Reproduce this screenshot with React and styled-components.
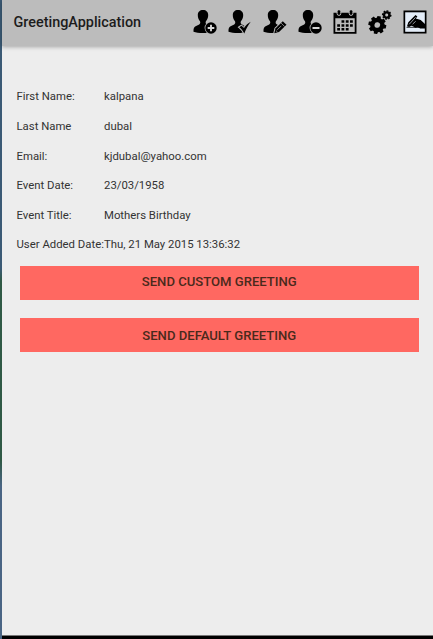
import React from "react";
import styled, { createGlobalStyle } from "styled-components";

const details = [
  { label: "First Name:", value: "kalpana" },
  { label: "Last Name", value: "dubal" },
  { label: "Email:", value: "kjdubal@yahoo.com" },
  { label: "Event Date:", value: "23/03/1958" },
  { label: "Event Title:", value: "Mothers Birthday" },
  { label: "User Added Date:", value: "Thu, 21 May 2015 13:36:32" },
];

const Person = () => (
  <path d="M10 0C6.800 0 4.800 2 4.800 5c0 2.700.8 4.800 2.200 6.300.5 1.200.3 2.400-.8 3.100L2.600 16.300C1 17.100.5 18.700.5 20.500v1.300c2.300.8 5.700 1.200 9.300 1.200 2 0 3.700-.1 5.200-.5l3.400-4.700c-.4-1-1-1.500-1.800-1.900l-2.900-1.600c-1.100-.6-1.300-1.800-.8-3C14.300 9.800 15.200 7.700 15.200 5c0-3-2-5-5.200-5z" />
);

const UserAddIcon = () => (
  <Icon viewBox="0 0 24 24">
    <Person />
    <circle cx="18" cy="18" r="6.400" fill="#bcbcbc" />
    <circle cx="18" cy="18" r="5.700" />
    <path d="M14.700 18h6.600M18 14.700v6.600" stroke="#d6d6d6" strokeWidth="1.900" />
  </Icon>
);

const UserCheckIcon = () => (
  <Icon viewBox="0 0 24 24">
    <Person />
    <path
      d="M11.300 17.200l2.200-1.500 2.500 2.400c2-2.900 4-4.900 6.800-6.300-2.600 3-4.500 7-6.500 11.700-1.300-2.600-2.800-4.600-5-6.300z"
      stroke="#bcbcbc"
      strokeWidth="2"
      paintOrder="stroke"
    />
  </Icon>
);

const UserEditIcon = () => (
  <Icon viewBox="0 0 24 24">
    <Person />
    <path
      d="M11.300 23.300l1.100-4.700 7.400-7.300 3.700 3.500-7.500 7.300z"
      stroke="#bcbcbc"
      strokeWidth="2"
      paintOrder="stroke"
    />
    <path
      d="M18.100 13.100l3.500 3.400M14.300 19.800l4-4M12.900 20.600l1.500 1.400"
      stroke="#bcbcbc"
      strokeWidth=".7"
    />
  </Icon>
);

const UserRemoveIcon = () => (
  <Icon viewBox="0 0 24 24">
    <Person />
    <circle cx="18" cy="18" r="6.400" fill="#bcbcbc" />
    <circle cx="18" cy="18" r="5.700" />
    <path d="M14.500 18h7" stroke="#d6d6d6" strokeWidth="2" />
  </Icon>
);

const CalendarIcon = () => (
  <Icon viewBox="0 0 24 24">
    <path d="M.5 2.700h23v21H.5zM2.300 8.300v13.700h19.400V8.300z" fillRule="evenodd" />
    <g stroke="#bcbcbc" strokeWidth="1">
      <rect x="4.100" y="-.3" width="3.700" height="5.700" rx="1.800" />
      <rect x="16.200" y="-.3" width="3.700" height="5.700" rx="1.800" />
    </g>
    <path d="M8.500 10.300h2.800v2.500H8.500zM12.800 10.300h2.800v2.500h-2.800zM17 10.300h2.800v2.500H17zM4.200 14.200H7v2.500H4.200zM8.500 14.200h2.800v2.500H8.500zM12.800 14.200h2.800v2.500h-2.800zM17 14.200h2.800v2.500H17zM4.200 18.100H7v2.500H4.200zM8.500 18.100h2.800v2.500H8.500zM12.800 18.100h2.800v2.500h-2.800z" />
  </Icon>
);

const gearTeeth = [0, 45, 90, 135, 180, 225, 270, 315];

const Gear = ({ x, y, scale, turn }) => (
  <g transform={`translate(${x} ${y}) rotate(${turn}) scale(${scale})`}>
    <circle r="5.300" fill="none" stroke="#000" strokeWidth="4.600" />
    {gearTeeth.map((angle) => (
      <path
        key={angle}
        d="M-2.300-6.500L-1.800-9.500h3.600l.5 3z"
        transform={`rotate(${angle})`}
      />
    ))}
  </g>
);

const SettingsIcon = () => (
  <Icon viewBox="0 0 24 24">
    <Gear x={9.3} y={15} scale={0.94} turn={12} />
    <Gear x={18.7} y={5} scale={0.5} turn={10} />
  </Icon>
);

const SignIcon = () => (
  <Icon viewBox="0 0 24 24">
    <rect x=".5" y=".5" width="23" height="23" />
    <rect x="2.200" y="2.300" width="19.600" height="19.500" fill="#e4edf8" />
    <path d="M4 16.300l1.300-4.100 7.200-7.100 1.900 1.300-1.600 2.100 4.900 1.600 4.300 4v4.400h-4.800l-2.400-1.300-2.600.5-2.300-1.500-1.600-.4-2.200 1.300z" />
    <path
      d="M6.200 14.300l6.400-7M9.600 14.100l3.100-2.800"
      fill="none"
      stroke="#e4edf8"
      strokeWidth=".65"
    />
    <path d="M3.500 17.300h17" stroke="#000" strokeWidth=".8" />
  </Icon>
);

const App = () => {
  return (
    <>
      <GlobalStyle />
      <Screen>
        <ActionBar>
          <Title>GreetingApplication</Title>
          <Actions>
            <UserAddIcon />
            <UserCheckIcon />
            <UserEditIcon />
            <UserRemoveIcon />
            <CalendarIcon />
            <SettingsIcon />
            <SignIcon />
          </Actions>
        </ActionBar>
        <Content>
          <Details>
            {details.map((item) => (
              <DetailRow key={item.label}>
                <span>{item.label}</span>
                <span>{item.value}</span>
              </DetailRow>
            ))}
          </Details>
          <Buttons>
            <GreetingButton $height={34.5}>Send Custom Greeting</GreetingButton>
            <GreetingButton $height={34}>Send Default Greeting</GreetingButton>
          </Buttons>
        </Content>
      </Screen>
    </>
  );
};

const GlobalStyle = createGlobalStyle`
  * {
    box-sizing: border-box;
  }

  body {
    margin: 0;
    font-family: Roboto, sans-serif;
    background: #ededed;
  }
`;

const Screen = styled.div`
  display: flex;
  flex-direction: column;
  height: 639px;
  background: #ededed;
  border-left: 2px solid;
  border-image: linear-gradient(
      #3b5a75 0,
      #3b5a75 42%,
      #2f5945 44%,
      #2f5945 72%,
      #4a6584 76%,
      #4a6584 100%
    )
    1;
  border-image-width: 0 0 0 2px;

  &::after {
    content: "";
    height: 3px;
    margin-top: auto;
    background: #000;
    border-top: 1px solid #777;
  }
`;

const ActionBar = styled.header`
  display: flex;
  align-items: center;
  justify-content: space-between;
  height: 46px;
  flex-shrink: 0;
  padding: 0 6px 3px 11.500px;
  background: #bcbcbc;
  box-shadow: 0 1px 4px rgba(0, 0, 0, 0.3);
`;

const Title = styled.h1`
  margin: 0;
  padding-top: 3px;
  font-size: 14.400px;
  font-weight: 500;
  line-height: 20px;
  color: #1c1c1c;
`;

const Actions = styled.div`
  display: flex;
  gap: 11px;
`;

const Icon = styled.svg`
  display: block;
  width: 24px;
  height: 24px;
  fill: #000;
`;

const Content = styled.main`
  padding: 35.600px 14.500px 0;
`;

const Details = styled.div`
  display: flex;
  flex-direction: column;
`;

const DetailRow = styled.div`
  display: grid;
  grid-template-columns: 87.500px 1fr;
  align-items: center;
  height: 29.600px;
  font-size: 11.350px;
  color: #333;
  white-space: nowrap;
`;

const Buttons = styled.div`
  display: flex;
  flex-direction: column;
  gap: 18px;
  padding: 6.400px 0 0 3.500px;
`;

const GreetingButton = styled.button`
  width: 100%;
  height: ${(props) => props.$height}px;
  padding: 0 0 2px;
  border: none;
  background: #ff6861;
  font-family: inherit;
  font-size: 13.100px;
  font-weight: 500;
  text-transform: uppercase;
  color: #4a2a1c;

  & + & {
    padding-bottom: 0;
  }
`;

export default App;
